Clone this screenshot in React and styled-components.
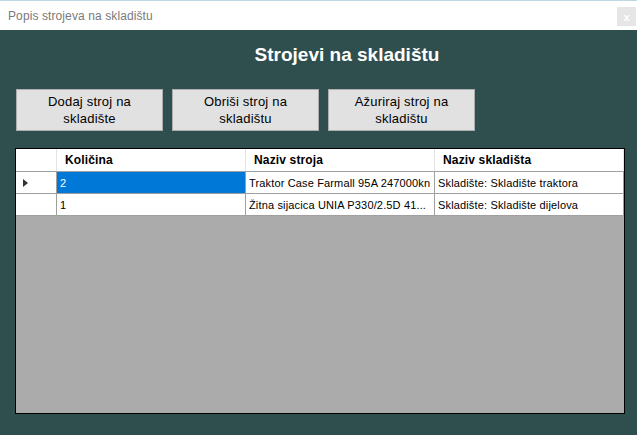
import React from "react";
import styled, { createGlobalStyle } from "styled-components";

const Global = createGlobalStyle`
  html, body { margin: 0; padding: 0; }
  body { background: #2f4f4f; font-family: "Liberation Sans", Arial, sans-serif; overflow: hidden; }
  #root { width: 637px; height: 435px; }
`;

const Window = styled.div`
  width: 637px;
  height: 435px;
  display: flex;
  flex-direction: column;
  background: #2f4f4f;
`;

const TitleBar = styled.div`
  height: 30px;
  box-sizing: border-box;
  border-top: 1px solid #bcd9e4;
  background: #ffffff;
  display: flex;
  align-items: center;
  justify-content: space-between;
  padding: 0 1px 0 8px;
`;

const TitleText = styled.span`
  font-size: 12px;
  color: #7a7a7a;
  letter-spacing: 0.1px;
`;

const CloseBox = styled.div`
  width: 19px;
  height: 19px;
  background: #e6e6e6;
  color: #ffffff;
  font-size: 11px;
  font-weight: bold;
  display: flex;
  align-items: center;
  justify-content: center;
  margin-top: 2px;
`;

const Content = styled.div`
  flex: 1;
  display: flex;
  flex-direction: column;
  padding: 0 12px 21px 15px;
`;

const Heading = styled.h1`
  margin: 10px 0 0;
  padding-left: 54px;
  text-align: center;
  color: #ffffff;
  font-size: 19px;
  font-weight: bold;
  height: 29px;
  line-height: 29px;
`;

const ButtonRow = styled.div`
  display: flex;
  gap: 9px;
  margin-top: 20px;
  padding-left: 1px;
`;

const Button = styled.button`
  width: 147px;
  height: 42px;
  box-sizing: border-box;
  background: #e1e1e1;
  border: 1px solid #adadad;
  color: #000;
  font-family: "Liberation Sans", Arial, sans-serif;
  font-size: 13px;
  line-height: 17px;
  letter-spacing: 0.2px;
  padding: 0 18px;
  text-align: center;
`;

const Grid = styled.div`
  margin-top: 17px;
  flex: 1;
  border: 1px solid #000;
  background: #ababab;
  display: flex;
  flex-direction: column;
`;

const Row = styled.div`
  display: grid;
  grid-template-columns: 41px 189px 189px 189px;
  height: ${(p) => (p.$header ? 23 : 22)}px;
  background: #fff;
  box-sizing: border-box;
  border-bottom: 1px solid #a0a0a0;
`;

const Cell = styled.div`
  box-sizing: border-box;
  border-right: 1px solid ${(p) => (p.$header ? "#e3e3e3" : "#a0a0a0")};
  display: flex;
  align-items: center;
  font-size: ${(p) => (p.$header ? 12 : 11)}px;
  font-weight: ${(p) => (p.$header ? "bold" : "normal")};
  padding-left: ${(p) => (p.$header ? 8 : 3)}px;
  letter-spacing: 0.15px;
  color: ${(p) => (p.$selected ? "#fff" : "#000")};
  background: ${(p) => (p.$selected ? "#0078d7" : "#fff")};
  white-space: nowrap;
  overflow: hidden;
`;

const RowHead = styled(Cell)`
  padding-left: 7px;
`;

const Arrow = styled.span`
  width: 0;
  height: 0;
  border-top: 4.5px solid transparent;
  border-bottom: 4.5px solid transparent;
  border-left: 5px solid #333;
`;

const rows = [
  { qty: "2", name: "Traktor Case Farmall 95A 247000kn", store: "Skladište: Skladište traktora", current: true },
  { qty: "1", name: "Žitna sijacica UNIA P330/2.5D 41...", store: "Skladište: Skladište dijelova" },
];

export default function App() {
  return (
    <Window>
      <Global />
      <TitleBar>
        <TitleText>Popis strojeva na skladištu</TitleText>
        <CloseBox>x</CloseBox>
      </TitleBar>
      <Content>
        <Heading>Strojevi na skladištu</Heading>
        <ButtonRow>
          <Button>Dodaj stroj na skladište</Button>
          <Button>Obriši stroj na skladištu</Button>
          <Button>Ažuriraj stroj na skladištu</Button>
        </ButtonRow>
        <Grid>
          <Row $header>
            <Cell $header />
            <Cell $header>Količina</Cell>
            <Cell $header>Naziv stroja</Cell>
            <Cell $header>Naziv skladišta</Cell>
          </Row>
          {rows.map((r, i) => (
            <Row key={i}>
              <RowHead>{r.current && <Arrow />}</RowHead>
              <Cell $selected={r.current}>{r.qty}</Cell>
              <Cell>{r.name}</Cell>
              <Cell>{r.store}</Cell>
            </Row>
          ))}
        </Grid>
      </Content>
    </Window>
  );
}
